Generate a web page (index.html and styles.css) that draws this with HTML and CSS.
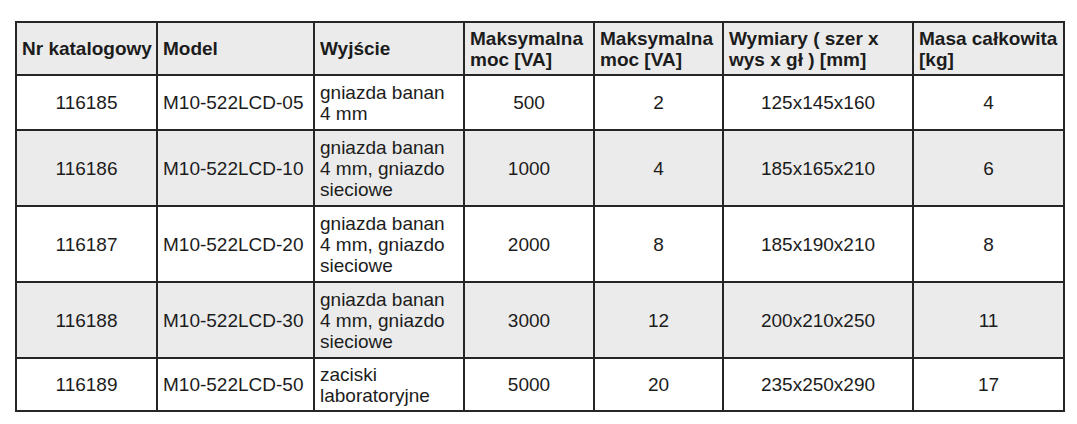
FILE: index.html
```html
<!DOCTYPE html>
<html lang="pl">
<head>
<meta charset="utf-8">
<link rel="stylesheet" href="styles.css">
</head>
<body>
<table class="spec">
  <colgroup>
    <col class="c1"><col class="c2"><col class="c3"><col class="c4"><col class="c5"><col class="c6"><col class="c7">
  </colgroup>
  <thead>
    <tr class="h">
      <th>Nr katalogowy</th>
      <th>Model</th>
      <th>Wyjście</th>
      <th>Maksymalna<br>moc [VA]</th>
      <th>Maksymalna<br>moc [VA]</th>
      <th>Wymiary ( szer x<br>wys x gł ) [mm]</th>
      <th>Masa całkowita<br>[kg]</th>
    </tr>
  </thead>
  <tbody>
    <tr class="r2">
      <td class="ctr">116185</td><td>M10-522LCD-05</td><td>gniazda banan<br>4 mm</td><td class="ctr">500</td><td class="ctr">2</td><td class="ctr">125x145x160</td><td class="ctr">4</td>
    </tr>
    <tr class="r3 alt">
      <td class="ctr">116186</td><td>M10-522LCD-10</td><td>gniazda banan<br>4 mm, gniazdo<br>sieciowe</td><td class="ctr">1000</td><td class="ctr">4</td><td class="ctr">185x165x210</td><td class="ctr">6</td>
    </tr>
    <tr class="r3">
      <td class="ctr">116187</td><td>M10-522LCD-20</td><td>gniazda banan<br>4 mm, gniazdo<br>sieciowe</td><td class="ctr">2000</td><td class="ctr">8</td><td class="ctr">185x190x210</td><td class="ctr">8</td>
    </tr>
    <tr class="r3 alt">
      <td class="ctr">116188</td><td>M10-522LCD-30</td><td>gniazda banan<br>4 mm, gniazdo<br>sieciowe</td><td class="ctr">3000</td><td class="ctr">12</td><td class="ctr">200x210x250</td><td class="ctr">11</td>
    </tr>
    <tr class="r2 last">
      <td class="ctr">116189</td><td>M10-522LCD-50</td><td>zaciski<br>laboratoryjne</td><td class="ctr">5000</td><td class="ctr">20</td><td class="ctr">235x250x290</td><td class="ctr">17</td>
    </tr>
  </tbody>
</table>
</body>
</html>
```
FILE: styles.css
```css
html, body {
  margin: 0;
  background: #ffffff;
}
body {
  padding: 21px 0 0 15px;
  font-family: "Liberation Sans", Arial, sans-serif;
  color: #1c1c1c;
}
.spec {
  border-collapse: collapse;
  table-layout: fixed;
  width: 1048px;
  font-size: 19px;
  line-height: 21px;
}
.c1 { width: 141px; }
.c2 { width: 157px; }
.c3 { width: 150px; }
.c4 { width: 130px; }
.c5 { width: 129px; }
.c6 { width: 190px; }
.c7 { width: 151px; }
.spec th, .spec td {
  border: 2px solid #262626;
  padding: 0 5px;
  vertical-align: middle;
  text-align: left;
  white-space: nowrap;
}
.spec th {
  font-weight: bold;
  background: #ebebeb;
}
.spec .ctr { text-align: center; }
.h { height: 53px; }
.r2 { height: 55px; }
.r3 { height: 76px; }
.last { height: 53px; }
.alt td { background: #ebebeb; }
```
